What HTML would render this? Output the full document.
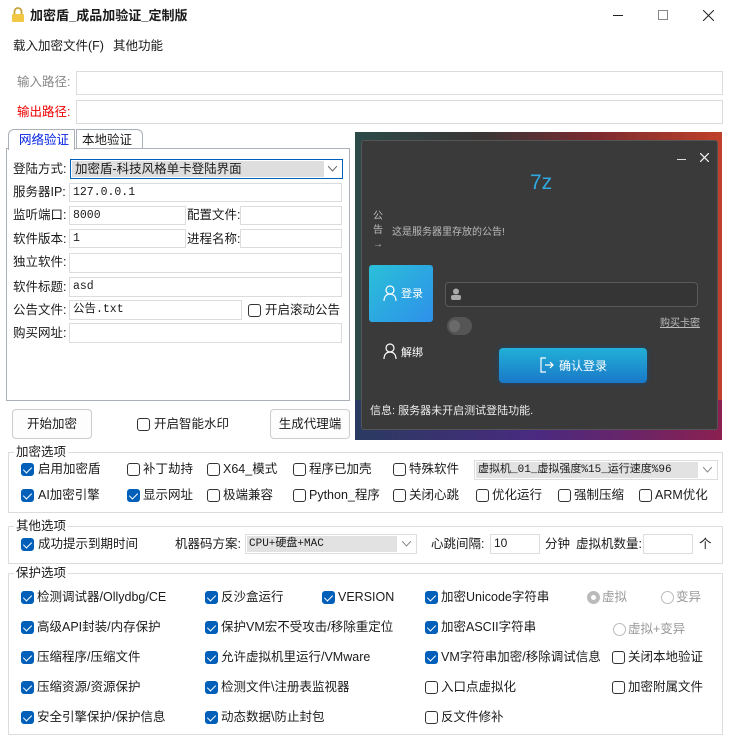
<!DOCTYPE html>
<html><head><meta charset="utf-8"><style>
*{margin:0;padding:0;box-sizing:border-box}
body{width:731px;height:747px;background:#fff;font-family:"Liberation Sans","Noto Sans CJK SC",sans-serif;font-size:12.5px;color:#1a1a1a;position:relative;overflow:hidden}
.a{position:absolute;white-space:nowrap}
.t{position:absolute;white-space:nowrap;line-height:16px}
.in{position:absolute;border:1px solid #dcdcdc;background:#fff;font-family:"Liberation Mono","Noto Sans CJK SC",monospace;font-size:11.5px;line-height:17px;padding-left:3px}
.cb{position:absolute;width:13px;height:13px;border:1px solid #333;border-radius:3px;background:#fff}
.cb.on{background:#005fb8;border-color:#005fb8}
.cb.on::after{content:"";position:absolute;left:3px;top:1px;width:4px;height:7px;border:solid #fff;border-width:0 1.5px 1.5px 0;transform:rotate(45deg)}
.grp{position:absolute;border:1px solid #dcdcdc}
.gl{position:absolute;background:#fff;padding:0 2px;line-height:14px}
.btn{position:absolute;border:1px solid #ccc;border-radius:4px;background:#fdfdfd;text-align:center}
.rd{position:absolute;width:13px;height:13px;border:1px solid #bbb;border-radius:50%}
.g{color:#999}
</style></head><body>
<!-- title -->
<svg class="a" style="left:11px;top:7px" width="14" height="16" viewBox="0 0 14 16"><path d="M3.5 7V4.5a3.5 3.5 0 0 1 7 0V7" fill="none" stroke="#c9a437" stroke-width="1.8"/><rect x="1" y="7" width="12" height="8" rx="1" fill="#f2c744"/></svg>
<div class="t" style="left:30px;top:8px;font-size:13px;font-weight:bold">加密盾_成品加验证_定制版</div>
<div class="a" style="left:613px;top:15px;width:10px;height:1px;background:#222"></div>
<div class="a" style="left:658px;top:10px;width:10px;height:10px;border:1px solid #888"></div>
<svg class="a" style="left:703px;top:10px" width="11" height="11"><path d="M0 0L11 11M11 0L0 11" stroke="#222" stroke-width="1"/></svg>
<!-- menu -->
<div class="t" style="left:13px;top:38px">载入加密文件(F)</div>
<div class="t" style="left:113px;top:38px">其他功能</div>
<div class="t g" style="left:17px;top:74px;color:#888">输入路径:</div>
<div class="in" style="left:76px;top:71px;width:647px;height:24px"></div>
<div class="t" style="left:17px;top:104px;color:#e00">输出路径:</div>
<div class="in" style="left:76px;top:100px;width:647px;height:24px"></div>
<!-- tabs -->
<div class="a" style="left:6px;top:148px;width:344px;height:253px;border:1px solid #aab0b8"></div>
<div class="a" style="left:8px;top:129px;width:67px;height:21px;border:1px solid #aab0b8;border-bottom:none;background:#fff;border-radius:6px 0 0 0"></div>
<div class="t" style="left:19px;top:132px;color:#0020e0">网络验证</div>
<div class="a" style="left:76px;top:129px;width:67px;height:19px;border:1px solid #aab0b8;border-bottom:none;border-radius:0 6px 0 0"></div>
<div class="t" style="left:82px;top:132px">本地验证</div>
<div class="t" style="left:13px;top:161px">登陆方式:</div>
<div class="a" style="left:70px;top:159px;width:273px;height:20px;border:1px solid #0060c0;background:#fff"><div style="position:absolute;left:1px;top:1px;width:252px;height:16px;background:#dedede;line-height:16px;padding-left:3px">加密盾-科技风格单卡登陆界面</div><svg style="position:absolute;right:5px;top:6px" width="9" height="6"><path d="M0 0L4.5 5L9 0" fill="none" stroke="#666"/></svg></div>
<div class="t" style="left:13px;top:184px">服务器IP:</div><div class="in" style="left:69px;top:183px;width:273px;height:19px">127.0.0.1</div>
<div class="t" style="left:13px;top:207px">监听端口:</div><div class="in" style="left:69px;top:206px;width:117px;height:19px">8000</div>
<div class="t" style="left:187px;top:207px">配置文件:</div><div class="in" style="left:240px;top:206px;width:102px;height:19px"></div>
<div class="t" style="left:13px;top:231px">软件版本:</div><div class="in" style="left:69px;top:229px;width:117px;height:19px">1</div>
<div class="t" style="left:187px;top:231px">进程名称:</div><div class="in" style="left:240px;top:229px;width:102px;height:19px"></div>
<div class="t" style="left:13px;top:254px">独立软件:</div><div class="in" style="left:69px;top:253px;width:273px;height:20px"></div>
<div class="t" style="left:13px;top:279px">软件标题:</div><div class="in" style="left:69px;top:277px;width:273px;height:20px">asd</div>
<div class="t" style="left:13px;top:302px">公告文件:</div><div class="in" style="left:69px;top:300px;width:173px;height:20px">公告.txt</div>
<div class="cb" style="left:248px;top:304px"></div><div class="t" style="left:265px;top:302px">开启滚动公告</div>
<div class="t" style="left:13px;top:325px">购买网址:</div><div class="in" style="left:69px;top:323px;width:273px;height:20px"></div>
<div class="btn" style="left:12px;top:409px;width:80px;height:30px;line-height:28px">开始加密</div>
<div class="cb" style="left:137px;top:418px"></div><div class="t" style="left:154px;top:416px">开启智能水印</div>
<div class="btn" style="left:270px;top:409px;width:80px;height:30px;line-height:28px">生成代理端</div>
<!-- dark panel -->
<div class="a" style="left:355px;top:132px;width:367px;height:308px;background:linear-gradient(90deg,#2b4a48 0%,#3a3535 35%,#7a2a30 65%,#c0402a 100%)"></div>
<div class="a" style="left:355px;top:400px;width:367px;height:40px;background:linear-gradient(90deg,#2a3a60,#4a2a80 50%,#8a2050)"></div>
<div class="a" style="left:361px;top:140px;width:357px;height:290px;background:#3a3a3a;border:1px solid #555;border-radius:3px"></div>
<div class="a" style="left:677px;top:159px;width:9px;height:1px;background:#ddd"></div>
<svg class="a" style="left:700px;top:153px" width="9" height="9"><path d="M0 0L9 9M9 0L0 9" stroke="#eee" stroke-width="1.3"/></svg>
<div class="t" style="left:530px;top:172px;font-size:21px;line-height:22px;color:#2fa8e0">7z</div>
<div class="a" style="left:373px;top:210px;font-size:10px;line-height:14px;color:#bbb;width:12px;white-space:normal">公 告 →</div>
<div class="t" style="left:392px;top:225px;font-size:10px;color:#bbb">这是服务器里存放的公告!</div>
<div class="a" style="left:369px;top:265px;width:64px;height:57px;background:linear-gradient(135deg,#2ac0d8,#2e90ea);border-radius:3px"></div>
<svg class="a" style="left:383px;top:285px" width="14" height="16"><circle cx="7" cy="5" r="4" fill="none" stroke="#fff" stroke-width="1.2"/><path d="M1 16c0-5 3-7 6-7s6 2 6 7" fill="none" stroke="#fff" stroke-width="1.2"/></svg>
<div class="t" style="left:401px;top:286px;font-size:11px;color:#fff">登录</div>
<div class="a" style="left:445px;top:282px;width:253px;height:25px;border:1px solid #5a5a5a;border-radius:4px;background:#353535"></div>
<svg class="a" style="left:451px;top:288px" width="10" height="12"><circle cx="5" cy="3.5" r="3" fill="#aaa"/><rect x="0" y="7" width="10" height="5" rx="2" fill="#aaa"/></svg>
<div class="a" style="left:447px;top:317px;width:25px;height:18px;border-radius:9px;background:#555"><div style="position:absolute;left:2px;top:3px;width:11px;height:12px;border-radius:50%;background:#6a6a6a"></div></div>
<div class="t" style="left:660px;top:316px;font-size:10px;color:#bbb;text-decoration:underline">购买卡密</div>
<svg class="a" style="left:383px;top:343px" width="14" height="16"><circle cx="7" cy="5" r="4" fill="none" stroke="#fff" stroke-width="1.2"/><path d="M1 16c0-5 3-7 6-7s6 2 6 7" fill="none" stroke="#fff" stroke-width="1.2"/></svg>
<div class="t" style="left:401px;top:345px;font-size:11px;color:#fff">解绑</div>
<div class="a" style="left:499px;top:348px;width:148px;height:35px;border-radius:4px;background:linear-gradient(180deg,#22b0d8,#1a78c8);box-shadow:0 0 6px #1a4a70"></div>
<svg class="a" style="left:540px;top:357px" width="14" height="16"><path d="M6 1H1v14h5M5 8h8M10 5l3 3-3 3" fill="none" stroke="#fff" stroke-width="1.2"/></svg>
<div class="t" style="left:559px;top:358px;font-size:12px;color:#fff">确认登录</div>
<div class="t" style="left:370px;top:403px;font-size:11px;color:#eee">信息: 服务器未开启测试登陆功能.</div>
<!-- 加密选项 -->
<div class="grp" style="left:8px;top:452px;width:715px;height:61px"></div>
<div class="gl" style="left:14px;top:445px">加密选项</div>
<div class="cb on" style="left:21px;top:463px"></div><div class="t" style="left:38px;top:461px">启用加密盾</div>
<div class="cb" style="left:127px;top:463px"></div><div class="t" style="left:143px;top:461px">补丁劫持</div>
<div class="cb" style="left:207px;top:463px"></div><div class="t" style="left:223px;top:461px">X64_模式</div>
<div class="cb" style="left:293px;top:463px"></div><div class="t" style="left:309px;top:461px">程序已加壳</div>
<div class="cb" style="left:393px;top:463px"></div><div class="t" style="left:409px;top:461px">特殊软件</div>
<div class="a" style="left:474px;top:460px;width:244px;height:20px;border:1px solid #ddd"><div style="position:absolute;left:1px;top:1px;width:222px;height:16px;background:#e2e2e2;font-family:'Liberation Mono','Noto Sans CJK SC',monospace;font-size:11px;line-height:16px;padding-left:2px">虚拟机_01_虚拟强度%15_运行速度%96</div><svg style="position:absolute;right:5px;top:6px" width="9" height="6"><path d="M0 0L4.5 5L9 0" fill="none" stroke="#888"/></svg></div>
<div class="cb on" style="left:21px;top:489px"></div><div class="t" style="left:38px;top:487px">AI加密引擎</div>
<div class="cb on" style="left:127px;top:489px"></div><div class="t" style="left:143px;top:487px">显示网址</div>
<div class="cb" style="left:207px;top:489px"></div><div class="t" style="left:223px;top:487px">极端兼容</div>
<div class="cb" style="left:293px;top:489px"></div><div class="t" style="left:309px;top:487px">Python_程序</div>
<div class="cb" style="left:393px;top:489px"></div><div class="t" style="left:409px;top:487px">关闭心跳</div>
<div class="cb" style="left:476px;top:489px"></div><div class="t" style="left:492px;top:487px">优化运行</div>
<div class="cb" style="left:558px;top:489px"></div><div class="t" style="left:574px;top:487px">强制压缩</div>
<div class="cb" style="left:639px;top:489px"></div><div class="t" style="left:655px;top:487px">ARM优化</div>
<!-- 其他选项 -->
<div class="grp" style="left:8px;top:526px;width:715px;height:38px"></div>
<div class="gl" style="left:14px;top:519px">其他选项</div>
<div class="cb on" style="left:21px;top:538px"></div><div class="t" style="left:38px;top:536px">成功提示到期时间</div>
<div class="t" style="left:175px;top:536px">机器码方案:</div>
<div class="a" style="left:245px;top:534px;width:172px;height:20px;border:1px solid #ddd"><div style="position:absolute;left:1px;top:1px;width:150px;height:16px;background:#e2e2e2;font-family:'Liberation Mono','Noto Sans CJK SC',monospace;font-size:11px;line-height:16px;padding-left:2px">CPU+硬盘+MAC</div><svg style="position:absolute;right:5px;top:6px" width="9" height="6"><path d="M0 0L4.5 5L9 0" fill="none" stroke="#888"/></svg></div>
<div class="t" style="left:431px;top:536px">心跳间隔:</div><div class="in" style="left:490px;top:534px;width:50px;height:20px;font-family:'Liberation Sans';font-size:12px">10</div>
<div class="t" style="left:545px;top:536px">分钟</div>
<div class="t" style="left:576px;top:536px">虚拟机数量:</div><div class="in" style="left:643px;top:534px;width:50px;height:20px"></div>
<div class="t" style="left:699px;top:536px">个</div>
<!-- 保护选项 -->
<div class="grp" style="left:8px;top:573px;width:715px;height:162px"></div>
<div class="gl" style="left:14px;top:566px">保护选项</div>
<div class="cb on" style="left:21px;top:591px"></div><div class="t" style="left:37px;top:589px">检测调试器/Ollydbg/CE</div>
<div class="cb on" style="left:205px;top:591px"></div><div class="t" style="left:221px;top:589px">反沙盒运行</div>
<div class="cb on" style="left:322px;top:591px"></div><div class="t" style="left:338px;top:589px">VERSION</div>
<div class="cb on" style="left:425px;top:591px"></div><div class="t" style="left:441px;top:589px">加密Unicode字符串</div>
<div class="rd" style="left:587px;top:591px;border:4px solid #bbb"></div><div class="t" style="left:602px;top:589px;color:#999">虚拟</div>
<div class="rd" style="left:661px;top:591px"></div><div class="t" style="left:676px;top:589px;color:#999">变异</div>
<div class="cb on" style="left:21px;top:621px"></div><div class="t" style="left:37px;top:619px">高级API封装/内存保护</div>
<div class="cb on" style="left:205px;top:621px"></div><div class="t" style="left:221px;top:619px">保护VM宏不受攻击/移除重定位</div>
<div class="cb on" style="left:425px;top:621px"></div><div class="t" style="left:441px;top:619px">加密ASCII字符串</div>
<div class="rd" style="left:613px;top:623px"></div><div class="t" style="left:628px;top:621px;color:#999">虚拟+变异</div>
<div class="cb on" style="left:21px;top:651px"></div><div class="t" style="left:37px;top:649px">压缩程序/压缩文件</div>
<div class="cb on" style="left:205px;top:651px"></div><div class="t" style="left:221px;top:649px">允许虚拟机里运行/VMware</div>
<div class="cb on" style="left:425px;top:651px"></div><div class="t" style="left:441px;top:649px">VM字符串加密/移除调试信息</div>
<div class="cb" style="left:612px;top:651px"></div><div class="t" style="left:628px;top:649px">关闭本地验证</div>
<div class="cb on" style="left:21px;top:681px"></div><div class="t" style="left:37px;top:679px">压缩资源/资源保护</div>
<div class="cb on" style="left:205px;top:681px"></div><div class="t" style="left:221px;top:679px">检测文件\注册表监视器</div>
<div class="cb" style="left:425px;top:681px"></div><div class="t" style="left:441px;top:679px">入口点虚拟化</div>
<div class="cb" style="left:612px;top:681px"></div><div class="t" style="left:628px;top:679px">加密附属文件</div>
<div class="cb on" style="left:21px;top:711px"></div><div class="t" style="left:37px;top:709px">安全引擎保护/保护信息</div>
<div class="cb on" style="left:205px;top:711px"></div><div class="t" style="left:221px;top:709px">动态数据\防止封包</div>
<div class="cb" style="left:425px;top:711px"></div><div class="t" style="left:441px;top:709px">反文件修补</div>
</body></html>
